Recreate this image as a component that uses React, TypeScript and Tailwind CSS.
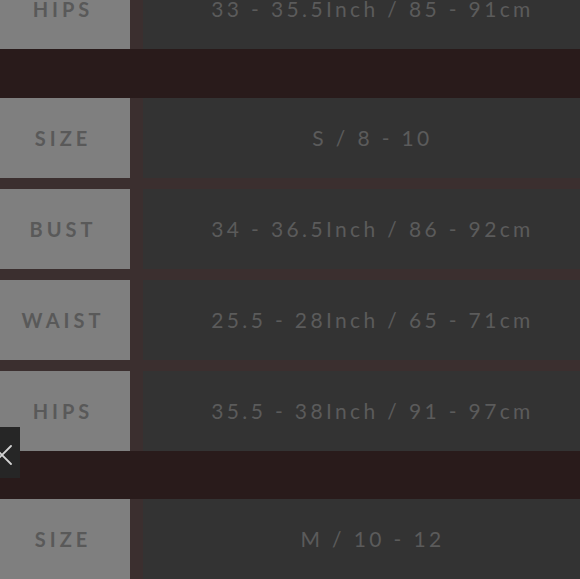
const rows = [
  { label: "SIZE", value: "S / 8 - 10" },
  { label: "BUST", value: "34 - 36.5Inch / 86 - 92cm" },
  { label: "WAIST", value: "25.5 - 28Inch / 65 - 71cm" },
  { label: "HIPS", value: "35.5 - 38Inch / 91 - 97cm" },
];

function Row({ label, value }: { label: string; value: string }) {
  return (
    <div className="flex h-[80px] gap-[13px]">
      <div className="flex w-[130px] shrink-0 items-center justify-center bg-[#7f7f7f] pr-[4px] text-[20px] font-bold tracking-[0.2em] text-[#595959]">
        {label}
      </div>
      <div className="flex flex-1 items-center justify-center bg-[#333333] pl-[3px] text-[21px] tracking-[0.16em] text-[#5b5b5b]">
        {value}
      </div>
    </div>
  );
}

export default function App() {
  return (
    <div
      className="relative h-[579px] w-[580px] overflow-hidden bg-[#3b2f2f]"
      style={{ fontFamily: "Lato, 'Open Sans', sans-serif" }}
    >
      <div className="-mt-[31px] flex w-[599px] flex-col">
        <Row label="HIPS" value="33 - 35.5Inch / 85 - 91cm" />
        <div className="h-[49px] bg-[#291b1b]" />
        <div className="flex flex-col gap-[11px]">
          {rows.map((r) => (
            <Row key={r.label} label={r.label} value={r.value} />
          ))}
        </div>
        <div className="h-[48px] bg-[#291b1b]" />
        <Row label="SIZE" value="M / 10 - 12" />
      </div>

      <button className="absolute left-0 top-[427px] h-[51px] w-[20px] overflow-hidden bg-[#262626]">
        <svg
          className="absolute left-[-9px] top-[17px]"
          width="22"
          height="22"
          viewBox="0 0 22 22"
          fill="none"
          stroke="#d4d4d4"
          strokeWidth="1.8"
          strokeLinecap="round"
        >
          <path d="M2 2L20 20M20 2L2 20" />
        </svg>
      </button>
    </div>
  );
}
